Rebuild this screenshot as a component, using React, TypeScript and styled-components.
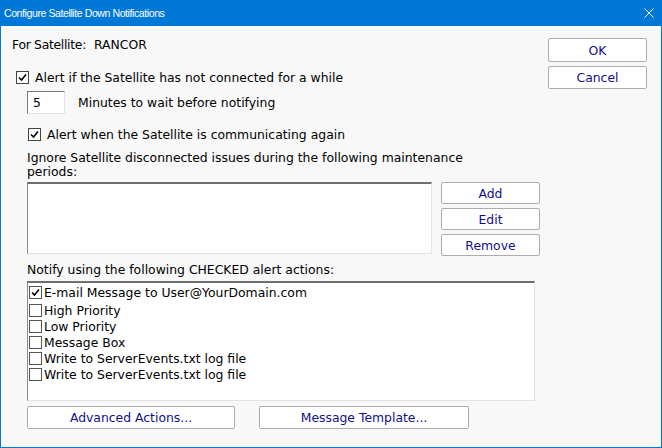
import React from 'react'
import styled, { createGlobalStyle } from 'styled-components'

const GlobalStyle = createGlobalStyle`
    html, body {
        margin: 0;
        padding: 0;
        background: #ffffff;
    }
    body {
        font-family: "DejaVu Sans", Verdana, sans-serif;
        color: #000;
    }
`

const Window = styled.div`
    width: 662px;
    height: 448px;
    display: flex;
    flex-direction: column;
    overflow: hidden;
`

const TitleBar = styled.div`
    height: 26px;
    flex: none;
    background: #0078d7;
    color: #ffffff;
    display: flex;
    align-items: center;
    justify-content: space-between;
    padding: 0 8px 0 4px;
    font-family: "Liberation Sans", Arial, sans-serif;
    font-size: 10.5px;
    letter-spacing: -0.4px;
`

const CloseButton = styled.div`
    width: 10px;
    height: 10px;
    display: flex;
`

const Body = styled.div`
    flex: 1;
    display: flex;
    border: 1px solid #0078d7;
    border-top: none;
    background: #f8f8f8;
    padding: 9px 14px 0 11px;
    font-size: 12.4px;
`

const LeftColumn = styled.div`
    flex: 1;
    display: flex;
    flex-direction: column;
`

const RightColumn = styled.div`
    width: 99px;
    flex: none;
    display: flex;
    flex-direction: column;
    gap: 4px;
    padding-top: 3px;
`

const Row = styled.div<{ $top?: number; $indent?: number; $height?: number; $alignTop?: boolean }>`
    display: flex;
    align-items: ${(p) => (p.$alignTop ? 'flex-start' : 'center')};
    margin-top: ${(p) => p.$top ?? 0}px;
    margin-left: ${(p) => p.$indent ?? 0}px;
    height: ${(p) => (p.$height ? `${p.$height}px` : 'auto')};
`

const FieldLabel = styled.span`
    width: 82px;
    letter-spacing: -0.3px;
`

const Label = styled.div<{ $top?: number; $indent?: number }>`
    margin-top: ${(p) => p.$top ?? 0}px;
    margin-left: ${(p) => p.$indent ?? 0}px;
    line-height: 14px;
    max-width: 470px;
`

const Box = styled.span<{ $list?: boolean }>`
    width: 11px;
    height: 11px;
    flex: none;
    border: 1px solid ${(p) => (p.$list ? '#555' : '#444')};
    background: #fff;
    display: flex;
    align-items: center;
    justify-content: center;
    margin-right: ${(p) => (p.$list ? 2 : 6)}px;
`

const NumberInput = styled.div`
    width: 38px;
    height: 23px;
    box-sizing: border-box;
    background: #fff;
    border: 1px solid #e3e3e3;
    border-top-color: #7a7a7a;
    border-left-color: #7a7a7a;
    display: flex;
    align-items: center;
    padding-left: 5px;
    margin-right: 13px;
`

const Sunken = styled.div<{ $width: number; $height: number }>`
    width: ${(p) => p.$width}px;
    height: ${(p) => p.$height}px;
    box-sizing: border-box;
    background: #fff;
    border: 1px solid #e3e3e3;
    border-top: 2px solid #6e6e6e;
    border-left: 1px solid #8a8a8a;
`

const ListItems = styled(Sunken)`
    display: flex;
    flex-direction: column;
    padding: 1px 0 0 1px;
`

const ListItem = styled.div<{ $first?: boolean }>`
    display: flex;
    align-items: center;
    flex: none;
    height: 16px;
    margin-bottom: ${(p) => (p.$first ? 2 : 0)}px;
`

const SideButtons = styled.div`
    display: flex;
    flex-direction: column;
    gap: 4px;
    margin-left: 9px;
`

const Button = styled.button<{ $width?: number; $height?: number }>`
    width: ${(p) => p.$width ?? 99}px;
    height: ${(p) => p.$height ?? 23}px;
    padding: 0;
    background: #ffffff;
    border: 1px solid #adadad;
    border-radius: 2px;
    color: #10108a;
    font-family: "DejaVu Sans", Verdana, sans-serif;
    font-size: 12.4px;
    text-align: center;
`

const BottomButtons = styled.div`
    display: flex;
    gap: 24px;
    margin-top: 5px;
    margin-left: 15px;
`

const Check = () => (
    <svg width="9" height="9" viewBox="0 0 9 9">
        <path d="M1 4.5 L3.5 7 L8 1.5" stroke="#000" strokeWidth="1.6" fill="none" />
    </svg>
)

const CheckBox: React.FC<{ checked?: boolean; list?: boolean }> = ({ checked, list }) => (
    <Box $list={list}>{checked && <Check />}</Box>
)

const actions = [
    { label: 'E-mail Message to User@YourDomain.com', checked: true },
    { label: 'High Priority', checked: false },
    { label: 'Low Priority', checked: false },
    { label: 'Message Box', checked: false },
    { label: 'Write to ServerEvents.txt log file', checked: false },
    { label: 'Write to ServerEvents.txt log file', checked: false },
]

const App: React.FC = () => (
    <>
        <GlobalStyle />
        <Window>
            <TitleBar>
                <span>Configure Satellite Down Notifications</span>
                <CloseButton>
                    <svg width="10" height="10" viewBox="0 0 10 10">
                        <path d="M0.5 0.5 L9.5 9.5 M9.5 0.5 L0.5 9.5" stroke="#fff" strokeWidth="1" />
                    </svg>
                </CloseButton>
            </TitleBar>
            <Body>
                <LeftColumn>
                    <Row $height={18}>
                        <FieldLabel>For Satellite:</FieldLabel>
                        <span>RANCOR</span>
                    </Row>
                    <Row $top={15} $indent={4} $height={18}>
                        <CheckBox checked />
                        <span>Alert if the Satellite has not connected for a while</span>
                    </Row>
                    <Row $top={5} $indent={15} $height={23}>
                        <NumberInput>5</NumberInput>
                        <span>Minutes to wait before notifying</span>
                    </Row>
                    <Row $top={11} $indent={16} $height={18}>
                        <CheckBox checked />
                        <span>Alert when the Satellite is communicating again</span>
                    </Row>
                    <Label $top={8} $indent={15}>
                        Ignore Satellite disconnected issues during the following maintenance periods:
                    </Label>
                    <Row $top={3} $indent={15} $height={72} $alignTop>
                        <Sunken $width={405} $height={72} />
                        <SideButtons>
                            <Button $height={22}>Add</Button>
                            <Button $height={22}>Edit</Button>
                            <Button $height={22}>Remove</Button>
                        </SideButtons>
                    </Row>
                    <Label $top={9} $indent={15}>
                        Notify using the following CHECKED alert actions:
                    </Label>
                    <Row $top={4} $indent={15}>
                        <ListItems $width={508} $height={120}>
                            {actions.map((a, i) => (
                                <ListItem key={i} $first={i === 0}>
                                    <CheckBox checked={a.checked} list />
                                    <span>{a.label}</span>
                                </ListItem>
                            ))}
                        </ListItems>
                    </Row>
                    <BottomButtons>
                        <Button $width={208}>Advanced Actions...</Button>
                        <Button $width={210}>Message Template...</Button>
                    </BottomButtons>
                </LeftColumn>
                <RightColumn>
                    <Button $height={24}>OK</Button>
                    <Button>Cancel</Button>
                </RightColumn>
            </Body>
        </Window>
    </>
)

export default App
